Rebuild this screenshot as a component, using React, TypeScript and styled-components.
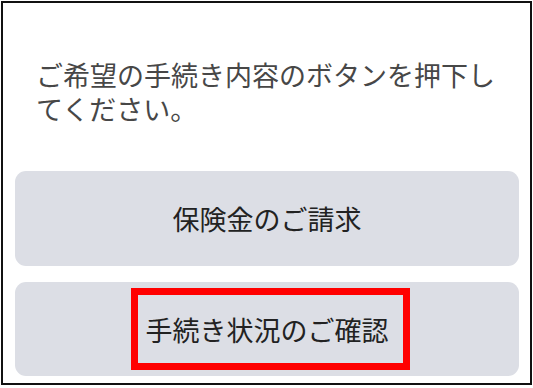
import React from "react";
import styled, { createGlobalStyle } from "styled-components";

const GlobalStyle = createGlobalStyle`
  html, body {
    margin: 0;
    padding: 0;
    background: #ffffff;
  }
  body {
    font-family: "Noto Sans CJK JP", "Noto Sans", sans-serif;
  }
`;

const Frame = styled.div`
  box-sizing: border-box;
  width: 531px;
  height: 384px;
  margin: 1px;
  border: 2px solid #111;
  background: #fff;
  padding: 55px 11px 0 12px;
  display: flex;
  flex-direction: column;
`;

const Lead = styled.p`
  margin: 0 0 45px 21px;
  width: 470px;
  font-size: 27px;
  line-height: 34px;
  color: #474747;
  letter-spacing: 0;
`;

const Choices = styled.div`
  display: flex;
  flex-direction: column;
  gap: 16px;
`;

const Choice = styled.button<{ $height: number }>`
  box-sizing: border-box;
  height: ${(p) => p.$height}px;
  width: 100%;
  border: none;
  border-radius: 11px;
  background: #dcdee5;
  display: flex;
  align-items: center;
  justify-content: center;
  font-family: inherit;
  font-size: 27px;
  color: #222;
  padding: 0;
  cursor: pointer;
`;

const Highlight = styled.span`
  box-sizing: border-box;
  height: 82px;
  margin-left: 6px;
  padding: 0 14px 0 8px;
  border: 7px solid #ff0000;
  display: inline-flex;
  align-items: center;
`;

export default function App() {
  return (
    <>
      <GlobalStyle />
      <Frame>
        <Lead>ご希望の手続き内容のボタンを押下してください。</Lead>
        <Choices>
          <Choice $height={95}>保険金のご請求</Choice>
          <Choice $height={94}>
            <Highlight>手続き状況のご確認</Highlight>
          </Choice>
        </Choices>
      </Frame>
    </>
  );
}
